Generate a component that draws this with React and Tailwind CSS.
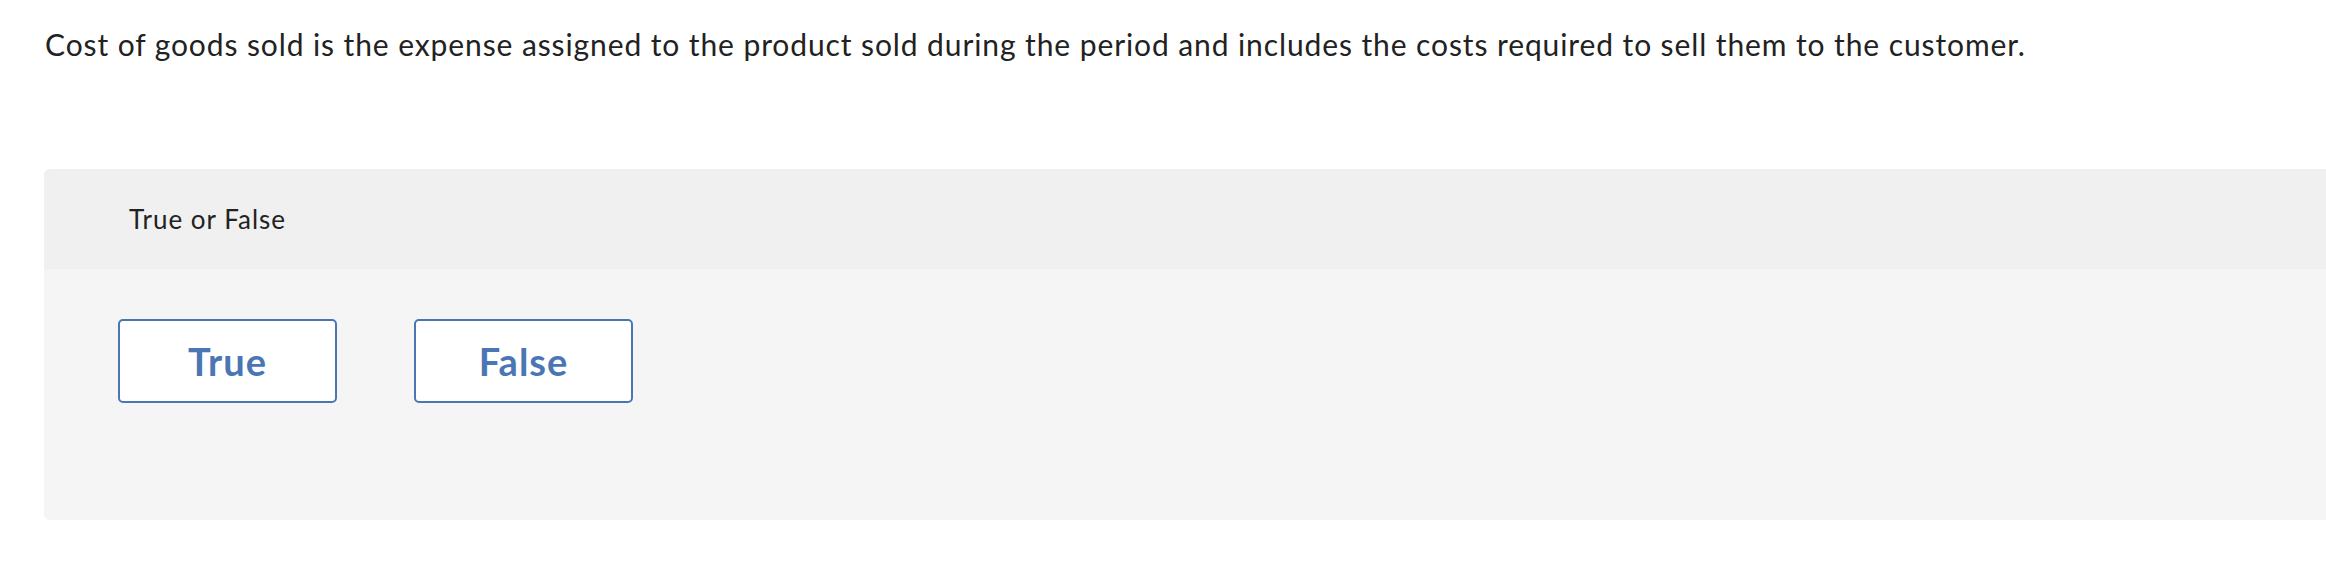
export default function App() {
  const choices = ['True', 'False']

  return (
    <div className="min-h-[562px] bg-white font-['Lato','Liberation_Sans',sans-serif] text-[#222222]">
      <p className="pl-[45px] pt-[26px] text-[30px] leading-[36px] tracking-[0.9px]">
        Cost of goods sold is the expense assigned to the product sold during the period and includes the costs required to sell them to the customer.
      </p>

      <section className="ml-[44px] mt-[107px] overflow-hidden rounded-l-[6px] bg-[#f5f5f5]">
        <header className="flex h-[100px] items-center bg-[#f0f0f0] pl-[85px] text-[26px] tracking-[1px]">
          True or False
        </header>
        <div className="flex h-[251px] items-start gap-[77px] pl-[74px] pt-[50px]">
          {choices.map((c) => (
            <button
              key={c}
              type="button"
              className="flex h-[84px] w-[219px] items-center justify-center rounded-[5px] border-2 border-[#4a76b4] bg-white text-[38px] font-bold tracking-[1px] text-[#4a76b4]"
            >
              {c}
            </button>
          ))}
        </div>
      </section>
    </div>
  )
}
